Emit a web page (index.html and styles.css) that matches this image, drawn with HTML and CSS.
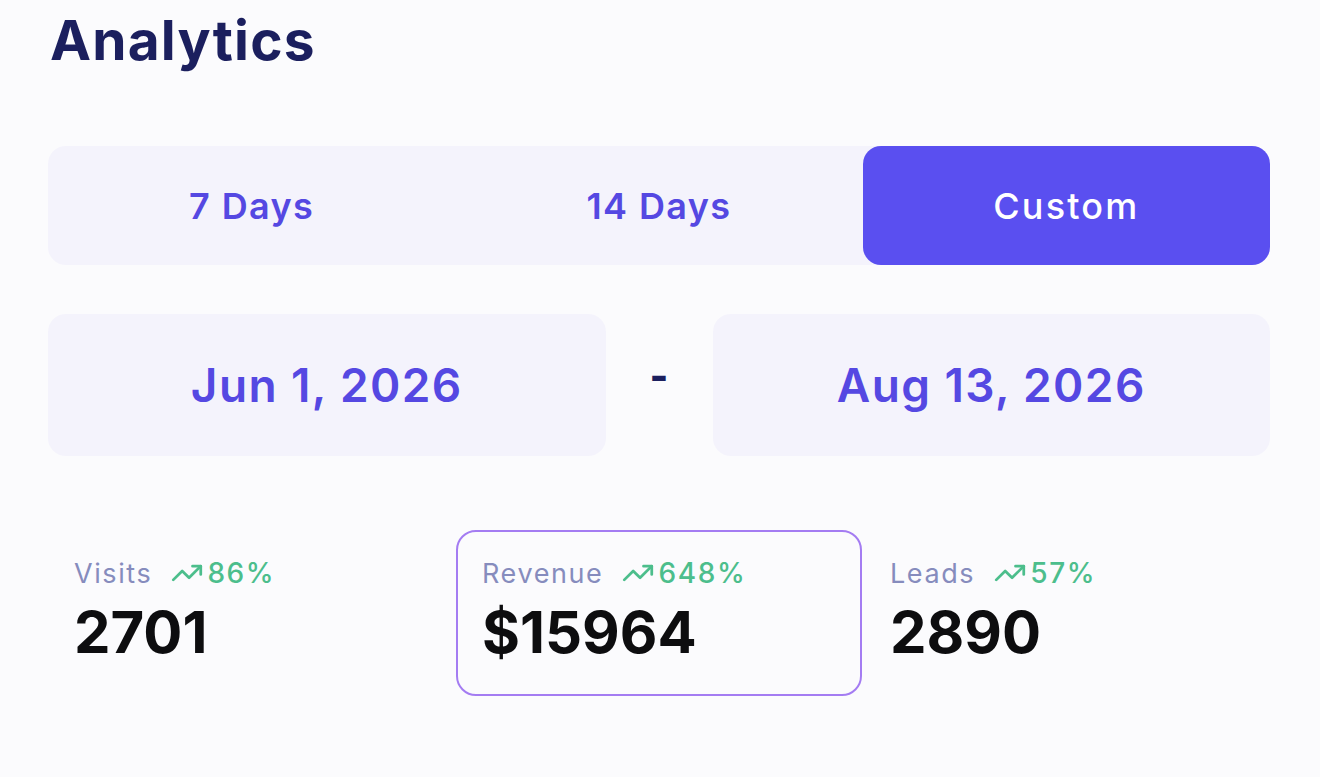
FILE: index.html
```html
<!DOCTYPE html>
<html lang="en">
<head>
    <meta charset="UTF-8">
    <title>Analytics</title>
    <link rel="stylesheet" href="styles.css">
</head>
<body>
    <div class="page">
        <h1 class="page-title">Analytics</h1>

        <div class="range-tabs">
            <button class="range-tab">7 Days</button>
            <button class="range-tab">14 Days</button>
            <button class="range-tab active">Custom</button>
        </div>

        <div class="date-row">
            <div class="date-box">Jun 1, 2026</div>
            <div class="date-dash">-</div>
            <div class="date-box">Aug 13, 2026</div>
        </div>

        <div class="stats">
            <div class="stat">
                <div class="stat-head">
                    <span class="stat-label">Visits</span>
                    <span class="stat-change">
                        <svg class="trend-icon" viewBox="0 0 24 16" fill="none" stroke="currentColor" stroke-width="2" stroke-linecap="round" stroke-linejoin="round"><polyline points="22 3 13.5 11.5 8.5 6.5 2 13"/><polyline points="16 3 22 3 22 9"/></svg>
                        86%
                    </span>
                </div>
                <div class="stat-value">2701</div>
            </div>
            <div class="stat selected">
                <div class="stat-head">
                    <span class="stat-label">Revenue</span>
                    <span class="stat-change">
                        <svg class="trend-icon" viewBox="0 0 24 16" fill="none" stroke="currentColor" stroke-width="2" stroke-linecap="round" stroke-linejoin="round"><polyline points="22 3 13.5 11.5 8.5 6.5 2 13"/><polyline points="16 3 22 3 22 9"/></svg>
                        648%
                    </span>
                </div>
                <div class="stat-value">$15964</div>
            </div>
            <div class="stat">
                <div class="stat-head">
                    <span class="stat-label">Leads</span>
                    <span class="stat-change">
                        <svg class="trend-icon" viewBox="0 0 24 16" fill="none" stroke="currentColor" stroke-width="2" stroke-linecap="round" stroke-linejoin="round"><polyline points="22 3 13.5 11.5 8.5 6.5 2 13"/><polyline points="16 3 22 3 22 9"/></svg>
                        57%
                    </span>
                </div>
                <div class="stat-value">2890</div>
            </div>
        </div>
    </div>
</body>
</html>
```

FILE: styles.css
```css
* {
    margin: 0;
    padding: 0;
    box-sizing: border-box;
}

body {
    background-color: #fbfbfd;
    font-family: Inter, "Noto Sans", sans-serif;
    color: #111;
}

.page {
    padding: 8px 50px 0 48px;
}

.page-title {
    color: #1b1f5e;
    font-size: 55px;
    font-weight: 700;
    line-height: 64px;
    padding-left: 2px;
    letter-spacing: 1.2px;
}

.range-tabs {
    display: grid;
    grid-template-columns: 1fr 1fr 1fr;
    margin-top: 74px;
    background-color: #f4f3fc;
    border-radius: 18px;
    height: 119px;
}

.range-tab {
    border: none;
    background: none;
    font-family: inherit;
    font-size: 36px;
    font-weight: 600;
    letter-spacing: 1.4px;
    color: #5548e2;
    border-radius: 18px;
    cursor: pointer;
}

.range-tab.active {
    background-color: #5a4ff0;
    color: #fff;
    font-weight: 500;
    letter-spacing: 2.2px;
}

.date-row {
    display: grid;
    grid-template-columns: 1fr 107px 1fr;
    margin-top: 49px;
    height: 142px;
}

.date-box {
    display: flex;
    align-items: center;
    justify-content: center;
    background-color: #f4f3fc;
    border-radius: 18px;
    font-size: 46px;
    font-weight: 600;
    letter-spacing: 1.4px;
    color: #5548e2;
}

.date-dash {
    display: flex;
    align-items: center;
    justify-content: center;
    font-size: 40px;
    font-weight: 800;
    color: #1b1f5e;
    padding-bottom: 20px;
}

.stats {
    display: grid;
    grid-template-columns: 1fr 1fr 1fr;
    gap: 2px;
    margin-top: 74px;
}

.stat {
    padding: 22px 24px 26px;
    border: 2px solid transparent;
    border-radius: 20px;
    height: 166px;
}

.stat.selected {
    border-color: #a47cf2;
}

.stat-head {
    display: flex;
    align-items: center;
    gap: 18px;
    height: 38px;
}

.stat-label {
    font-size: 27px;
    letter-spacing: 1.6px;
    color: #868cbd;
}

.stat-change {
    display: flex;
    align-items: center;
    gap: 3px;
    font-size: 28px;
    letter-spacing: 1.6px;
    color: #4cbe8c;
    font-weight: 500;
}

.trend-icon {
    width: 34px;
    height: 22px;
}

.stat-value {
    font-size: 58px;
    font-weight: 700;
    color: #0d0d0f;
    line-height: 64px;
    margin-top: 8px;
}
```
